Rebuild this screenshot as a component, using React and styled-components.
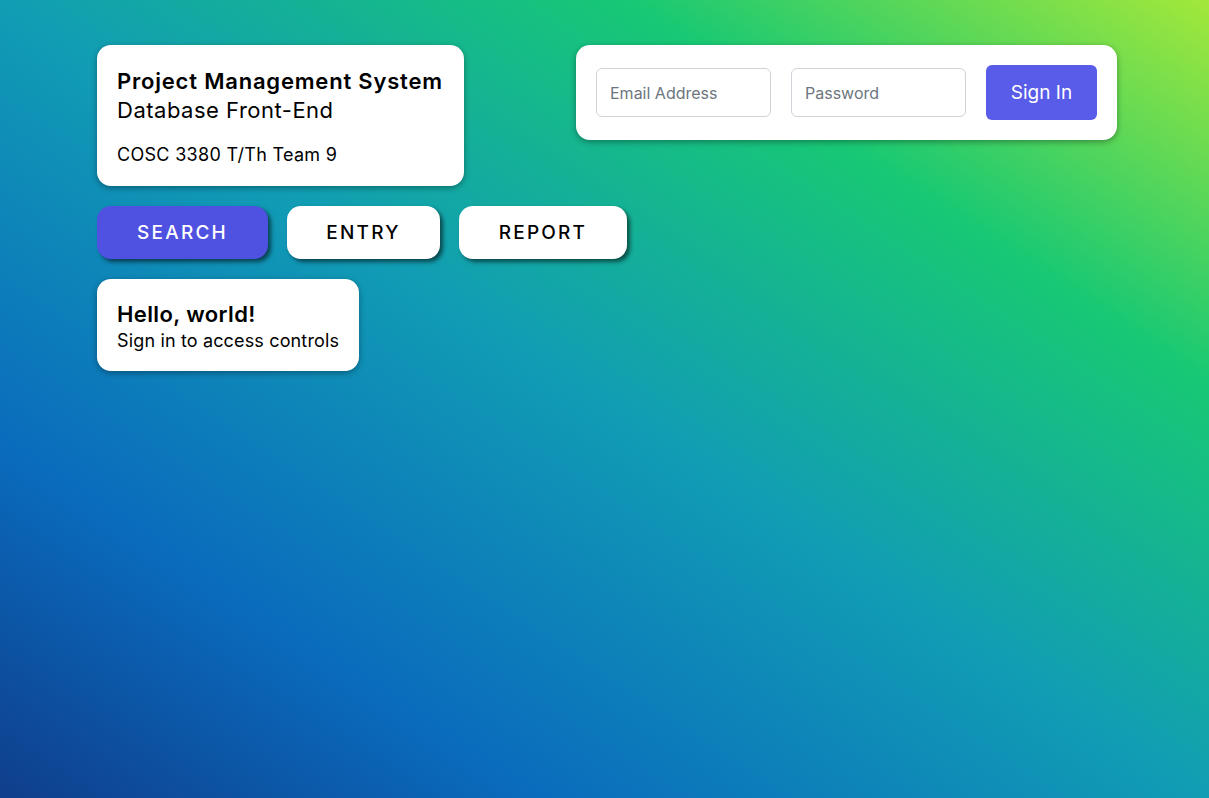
import styled, { createGlobalStyle } from "styled-components";

const GlobalStyle = createGlobalStyle`
  html, body {
    margin: 0;
    padding: 0;
    height: 100%;
  }
  body {
    font-family: Inter, "Noto Sans", "Liberation Sans", sans-serif;
    color: #000;
  }
  #root {
    min-height: 100%;
  }
`;

const Page = styled.div`
  min-height: 100vh;
  box-sizing: border-box;
  padding: 45px 92px 40px 97px;
  background: linear-gradient(
    to top right,
    #0f3e8c 0%,
    #0a6bbd 22%,
    #119db4 50%,
    #18c874 76%,
    #a3e83a 100%
  );
`;

const TopRow = styled.div`
  display: flex;
  justify-content: space-between;
  align-items: flex-start;
`;

const Card = styled.div`
  background: #fff;
  border-radius: 14px;
  box-shadow: 0 2px 6px rgba(0, 0, 0, 0.35);
  box-sizing: border-box;
`;

const TitleCard = styled(Card)`
  width: 367px;
  padding: 22px 20px 19px;
`;

const Title = styled.div`
  font-size: 22px;
  font-weight: 600;
  line-height: 29px;
  letter-spacing: 0.8px;
`;

const Subtitle = styled.div`
  font-size: 22px;
  font-weight: 400;
  line-height: 29px;
  letter-spacing: 0.5px;
`;

const Team = styled.div`
  margin-top: 18px;
  font-size: 18px;
  line-height: 24px;
  letter-spacing: 0.3px;
`;

const LoginCard = styled(Card)`
  width: 541px;
  padding: 20px;
  display: flex;
  align-items: center;
  gap: 20px;
`;

const Input = styled.input`
  width: 175px;
  height: 49px;
  box-sizing: border-box;
  border: 1px solid #ced4da;
  border-radius: 6px;
  padding: 0 13px;
  font-family: inherit;
  font-size: 16px;
  color: #212529;
  outline: none;
  &::placeholder {
    color: #6c757d;
  }
`;

const SignIn = styled.button`
  width: 111px;
  height: 55px;
  border: none;
  border-radius: 6px;
  background: #585ce8;
  color: #fff;
  font-family: inherit;
  font-size: 19px;
  cursor: pointer;
`;

const Tabs = styled.div`
  display: flex;
  gap: 19px;
  margin-top: 20px;
`;

const Tab = styled.button`
  width: ${(p) => p.$w}px;
  height: 53px;
  border: none;
  border-radius: 14px;
  background: ${(p) => (p.$active ? "#4f51e0" : "#fff")};
  color: ${(p) => (p.$active ? "#fff" : "#000")};
  box-shadow: 3px 3px 4px rgba(0, 0, 0, 0.55);
  font-family: inherit;
  font-size: 19px;
  font-weight: 500;
  letter-spacing: 2.2px;
  cursor: pointer;
`;

const HelloCard = styled(Card)`
  display: inline-block;
  margin-top: 20px;
  padding: 21px 20px 19px;
`;

const Hello = styled.div`
  font-size: 22px;
  font-weight: 600;
  line-height: 29px;
  letter-spacing: 0.4px;
`;

const HelloText = styled.div`
  font-size: 18px;
  line-height: 23px;
  letter-spacing: 0.15px;
`;

const tabs = [
  { label: "SEARCH", w: 171, active: true },
  { label: "ENTRY", w: 153 },
  { label: "REPORT", w: 168 },
];

export default function App() {
  return (
    <>
      <GlobalStyle />
      <Page>
        <TopRow>
          <TitleCard>
            <Title>Project Management System</Title>
            <Subtitle>Database Front-End</Subtitle>
            <Team>COSC 3380 T/Th Team 9</Team>
          </TitleCard>
          <LoginCard>
            <Input type="email" placeholder="Email Address" />
            <Input type="password" placeholder="Password" />
            <SignIn>Sign In</SignIn>
          </LoginCard>
        </TopRow>
        <Tabs>
          {tabs.map((t) => (
            <Tab key={t.label} $w={t.w} $active={t.active}>
              {t.label}
            </Tab>
          ))}
        </Tabs>
        <div>
          <HelloCard>
            <Hello>Hello, world!</Hello>
            <HelloText>Sign in to access controls</HelloText>
          </HelloCard>
        </div>
      </Page>
    </>
  );
}
